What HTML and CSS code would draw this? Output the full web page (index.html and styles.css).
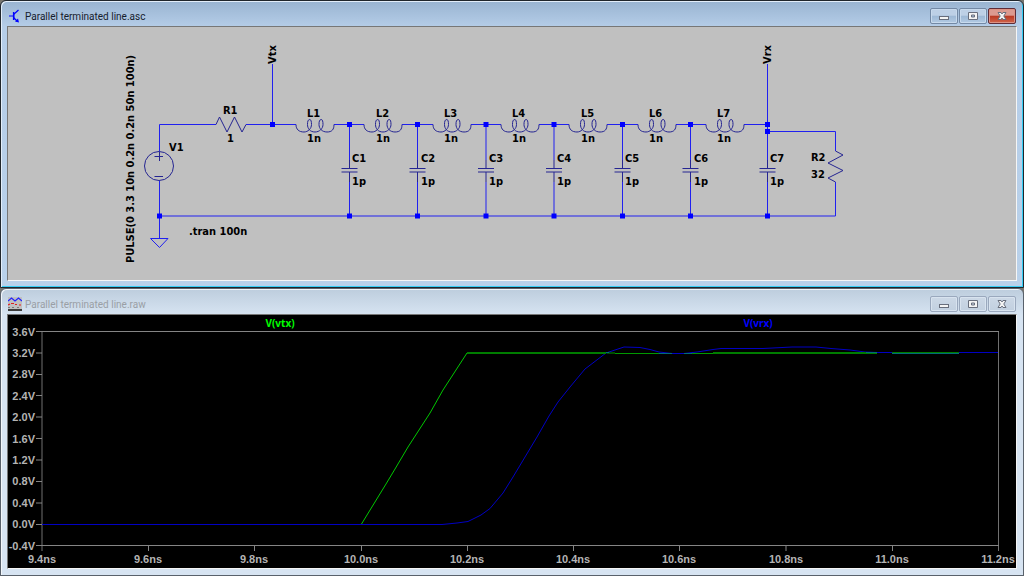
FILE: index.html
```html
<!DOCTYPE html>
<html lang="en">
<head>
<meta charset="utf-8">
<title>Parallel terminated line</title>
<link rel="stylesheet" href="styles.css">
</head>
<body>
<main class="desktop">
  <section class="window window-active">
    <header class="titlebar">
      <svg class="title-icon" viewBox="0 0 14 14" width="14" height="14" aria-hidden="true">
        <path d="M5.500 3v8M1 7h4.500M5.500 5.500l5-4.500M5.500 8.500l4 4" fill="none" stroke="#0000ff" stroke-width="1.200"/>
        <path d="M5 3.500h1.500v7H5z" fill="#0000ff"/>
        <path d="M11 13.500l-4-1 3-3z" fill="#0000ff"/>
      </svg>
      <h1 class="title">Parallel terminated line.asc</h1>
      <div class="controls">
        <button class="control" type="button" aria-label="Minimize"><svg class="glyph" viewBox="0 0 12 10"><rect x="1.5" y="5.5" width="9" height="3"/></svg></button>
        <button class="control" type="button" aria-label="Restore"><svg class="glyph" viewBox="0 0 12 10"><path d="M1.5 1.500h9v7h-9zM4.500 4h3v2h-3z" fill-rule="evenodd"/></svg></button>
        <button class="control control-close" type="button" aria-label="Close"><svg class="glyph" viewBox="0 0 12 10"><path d="M2 1.500h3l1 1.500 1-1.500h3L7.800 5 10 8.500H7L6 7 5 8.500H2L4.200 5z"/></svg></button>
      </div>
    </header>
    <div class="client schematic">
      <svg class="drawing" viewBox="8 27 1008 253" role="img" aria-label="Schematic">
        <defs>
          <path id="inductor" class="part" d="M0 0C0 5 3 7.500 8 7.500C12 7.500 15.500 4 15.500 0C15.500-3 15-5 13.800-5C12-5 11.500-3 11.500 0C11.500 4 14 7.500 19 7.500C23.500 7.500 27 4 27 0C27-3 26.500-5 25.300-5C23.500-5 23-3 23 0C23 4 26 7.500 31 7.500C36 7.500 38 5 38 0"/>
          <g id="capacitor">
            <path class="wire" d="M0 124.500V160M0 182V216"/>
            <path class="part" d="M0 160V168.500M0 172V182M-8 168.500H8M-8 172H8"/>
          </g>
          <rect id="node" class="node" x="-2.500" y="-2.500" width="5" height="5"/>
        </defs>
        <path class="wire" d="M159.500 151V124.500H216M246 124.500H296M334 124.500H364M402 124.500H433M471 124.500H501M539 124.500H569M607 124.500H638M676 124.500H706M744 124.500H767.500M159.500 181V238M159.500 216H835.500V182M767.500 131.500H835.500V151M272.500 64V124.500M767.500 64V131.500"/>
        <path class="wire" d="M150.500 238.500H168L159.500 247.500Z"/>
        <circle class="part" cx="159" cy="166" r="14.500"/>
        <path class="part" d="M154.500 156.500H163M159.500 152V161M154.500 176.500H163"/>
        <path class="part" d="M216 124.500L219.500 117L227 132L234.500 117L242 132L246 124.500"/>
        <path class="part" d="M835.500 151L843 155L828 163L843 170.500L828 178L835.500 182"/>
        <use href="#inductor" x="296" y="124.500"/><use href="#inductor" x="364" y="124.500"/><use href="#inductor" x="433" y="124.500"/><use href="#inductor" x="501" y="124.500"/><use href="#inductor" x="569" y="124.500"/><use href="#inductor" x="638" y="124.500"/><use href="#inductor" x="706" y="124.500"/>
        <use href="#capacitor" x="349.500"/><use href="#capacitor" x="417.500"/><use href="#capacitor" x="486"/><use href="#capacitor" x="554"/><use href="#capacitor" x="622.500"/><use href="#capacitor" x="690.500"/><use href="#capacitor" x="767.500"/>
        <use href="#node" x="272.500" y="124.500"/><use href="#node" x="349.500" y="124.500"/><use href="#node" x="417.500" y="124.500"/><use href="#node" x="486" y="124.500"/><use href="#node" x="554" y="124.500"/><use href="#node" x="622.500" y="124.500"/><use href="#node" x="690.500" y="124.500"/><use href="#node" x="767.500" y="124.500"/><use href="#node" x="767.500" y="131.500"/>
        <use href="#node" x="159.500" y="216"/><use href="#node" x="349.500" y="216"/><use href="#node" x="417.500" y="216"/><use href="#node" x="486" y="216"/><use href="#node" x="554" y="216"/><use href="#node" x="622.500" y="216"/><use href="#node" x="690.500" y="216"/><use href="#node" x="767.500" y="216"/>
        <g class="label">
          <text transform="translate(134 263) rotate(-90)">PULSE(0 3.3 10n 0.2n 0.2n 50n 100n)</text>
          <text transform="translate(276 64) rotate(-90)">Vtx</text>
          <text transform="translate(771 64) rotate(-90)">Vrx</text>
          <text x="223" y="114">R1</text><text x="227" y="142">1</text>
          <text x="169" y="151">V1</text>
          <text x="189" y="235">.tran 100n</text>
          <text x="307" y="117">L1</text><text x="307" y="142">1n</text>
          <text x="376" y="117">L2</text><text x="376" y="142">1n</text>
          <text x="444" y="117">L3</text><text x="444" y="142">1n</text>
          <text x="512" y="117">L4</text><text x="512" y="142">1n</text>
          <text x="581" y="117">L5</text><text x="581" y="142">1n</text>
          <text x="649" y="117">L6</text><text x="649" y="142">1n</text>
          <text x="717" y="117">L7</text><text x="717" y="142">1n</text>
          <text x="352" y="162">C1</text><text x="352" y="185">1p</text>
          <text x="421" y="162">C2</text><text x="421" y="185">1p</text>
          <text x="489" y="162">C3</text><text x="489" y="185">1p</text>
          <text x="557" y="162">C4</text><text x="557" y="185">1p</text>
          <text x="625" y="162">C5</text><text x="625" y="185">1p</text>
          <text x="694" y="162">C6</text><text x="694" y="185">1p</text>
          <text x="770" y="162">C7</text><text x="770" y="185">1p</text>
          <text x="811" y="161">R2</text><text x="811" y="178">32</text>
        </g>
      </svg>
    </div>
  </section>

  <section class="window">
    <header class="titlebar">
      <svg class="title-icon" viewBox="0 0 14 14" width="14" height="14" aria-hidden="true">
        <rect width="14" height="14" fill="#c0c0c0"/>
        <path d="M0 4L3.500 1 7 4 10.500 1 14 4" fill="none" stroke="#2020ff" stroke-width="1.200"/>
        <path d="M0 8L2 7M3 6.500H6M7 7.500H9M11 8H13" stroke="#e02020" stroke-width="1.200"/>
        <path d="M0 10.500H2M4 10.500H6M9 10.500H11" stroke="#777"/>
        <path d="M0 13H14" stroke="#111" stroke-width="1.500"/>
      </svg>
      <h2 class="title">Parallel terminated line.raw</h2>
      <div class="controls">
        <button class="control" type="button" aria-label="Minimize"><svg class="glyph" viewBox="0 0 12 10"><rect x="1.5" y="5.5" width="9" height="3"/></svg></button>
        <button class="control" type="button" aria-label="Restore"><svg class="glyph" viewBox="0 0 12 10"><path d="M1.5 1.500h9v7h-9zM4.500 4h3v2h-3z" fill-rule="evenodd"/></svg></button>
        <button class="control" type="button" aria-label="Close"><svg class="glyph" viewBox="0 0 12 10"><path d="M2 1.500h3l1 1.500 1-1.500h3L7.800 5 10 8.500H7L6 7 5 8.500H2L4.200 5z"/></svg></button>
      </div>
    </header>
    <div class="client plot">
      <svg class="drawing" viewBox="8 315 1008 253" role="img" aria-label="Waveforms">
        <path class="axis axis-side" d="M42 331V551M998.500 331V551"/>
        <path class="axis" d="M36 331.500H999M36 545.500H999M36 353H42M36 374.500H42M36 395.500H42M36 417H42M36 438.500H42M36 460H42M36 481.500H42M36 503H42M36 524.500H42M148.500 546V551M254.500 546V551M361.500 546V551M467.500 546V551M573.500 546V551M679.500 546V551M786 546V551M892.500 546V551"/>
        <path class="trace trace-rx" d="M42 524.500H442L457 523L468 521.500L481 515L490 508.500L503 493L513 477L537 437L549 416L558 402L570 387L585 369L606 353L615 350L624 347L640 347.500L650 349.500L659 352L672 353.500H684L697 352L713 349.500L721 348.500H763L792 347H816L831 348.500L850 350L865 352L877 352.500H998"/>
        <path class="trace trace-tx" d="M361.500 524L386 484L395 469L408 447L430 413L443 390L467 353"/>
        <path class="trace trace-tx-flat" d="M467 353H606M713 353H877M892 353H959"/>
        <path class="trace trace-tx-low" d="M607 353H615M615 353.500H672M684 353.500H713"/>
        <path class="overlap" d="M606 352.500H609M659 353.500H672M684 353.500H692M866 352.500H877M892 353.500H959"/>
        <text class="name name-tx" x="280" y="327">V(vtx)</text>
        <text class="name name-rx" x="758" y="327">V(vrx)</text>
        <g class="scale scale-y">
          <text x="35" y="336">3.6V</text><text x="35" y="357">3.2V</text><text x="35" y="378">2.8V</text><text x="35" y="400">2.4V</text><text x="35" y="421">2.0V</text><text x="35" y="443">1.6V</text><text x="35" y="464">1.2V</text><text x="35" y="485">0.8V</text><text x="35" y="507">0.4V</text><text x="35" y="528">0.0V</text><text x="35" y="550">-0.4V</text>
        </g>
        <g class="scale scale-x">
          <text x="42" y="563">9.4ns</text><text x="148" y="563">9.6ns</text><text x="254" y="563">9.8ns</text><text x="361" y="563">10.0ns</text><text x="467" y="563">10.2ns</text><text x="573" y="563">10.4ns</text><text x="679" y="563">10.6ns</text><text x="786" y="563">10.8ns</text><text x="892" y="563">11.0ns</text><text x="998" y="563">11.2ns</text>
        </g>
      </svg>
    </div>
  </section>
</main>
</body>
</html>
```

FILE: styles.css
```css
* {
  box-sizing: border-box;
}

body {
  margin: 0;
  background: #77756f;
  font-family: "Noto Sans", sans-serif;
}

.desktop {
  display: grid;
}

.window {
  min-width: 0;
  padding: 0 6px 6px;
  border: 1px solid #59616b;
  border-radius: 6px 6px 0 0;
  background: linear-gradient(#bdcddd, #d7e4f2 26px, #d7e4f2);
  box-shadow: inset 1px 1px 0 #f2f6fa;
}

.window-active {
  border-color: #20262c;
  background: linear-gradient(#99b4d1, #b5cde8 26px, #b9d1ea);
  box-shadow: inset 1px 1px 0 #e3eefa, inset -1px -1px 0 #35cdf5;
}

.titlebar {
  display: flex;
  align-items: center;
  height: 25px;
  padding: 5px 1px 0;
}

.title-icon {
  flex: none;
}

.title {
  flex: 1;
  margin: 0;
  padding: 1px 0 0 3px;
  overflow: hidden;
  color: #9a9fa5;
  font-family: Roboto, sans-serif;
  font-size: 10px;
  font-weight: 400;
  line-height: 16px;
  white-space: nowrap;
}

.window-active .title {
  color: #16202c;
}

.controls {
  display: flex;
  gap: 1px;
}

.control {
  display: flex;
  align-items: center;
  justify-content: center;
  width: 28px;
  height: 16px;
  padding: 0;
  border: 1px solid #9aa8bd;
  border-radius: 2px;
  background: linear-gradient(#ccd8e6, #c2d0e0);
  box-shadow: inset 0 0 0 1px #d8e3ef;
}

.window-active .control {
  border-color: #7389a5;
  background: linear-gradient(#bdd0e6 45%, #9db8d5 50%, #b2cae3);
  box-shadow: inset 0 0 0 1px #c8daed;
}

.window-active .control-close {
  border-color: #5e2c38;
  background: linear-gradient(#dc9a90 45%, #b93822 50%, #d0654c);
  box-shadow: inset 0 0 0 1px #dc9284;
}

.glyph {
  width: 12px;
  height: 10px;
  fill: #f4f4f4;
  stroke: #686e7c;
  stroke-width: 1;
}

.client {
  border: 1px solid;
  border-color: #777 #f5f5f5 #f5f5f5 #777;
}

.schematic {
  background: #c0c0c0;
}

.plot {
  background: #000;
}

.drawing {
  display: block;
  width: 100%;
  height: auto;
}

.wire,
.part,
.axis,
.trace,
.overlap {
  fill: none;
  stroke-width: 1;
}

.wire {
  stroke: #2020f0;
}

.part {
  stroke: #252592;
}

.node {
  fill: #0000ff;
}

.label {
  fill: #000;
  font-family: "DejaVu Sans Condensed", "DejaVu Sans", sans-serif;
  font-size: 11px;
  font-weight: 700;
}

.axis {
  stroke: #858585;
}

.axis-side {
  stroke: #707070;
}

.trace-rx {
  stroke: #0000c4;
}

.trace-tx {
  stroke: #00c800;
}

.trace-tx-flat {
  stroke: #007d00;
  stroke-width: 2;
}

.trace-tx-low {
  stroke: #009900;
}

.overlap {
  stroke: #006c78;
}

.name,
.scale {
  font-weight: 700;
}

.name {
  font-size: 10px;
  text-anchor: middle;
}

.name-tx {
  fill: #00ff00;
}

.name-rx {
  fill: #0000ff;
}

.scale {
  fill: #b4b4b4;
  font-family: "Liberation Sans", Arial, sans-serif;
  font-size: 11px;
}

.scale-y {
  text-anchor: end;
}

.scale-x {
  text-anchor: middle;
}
```
